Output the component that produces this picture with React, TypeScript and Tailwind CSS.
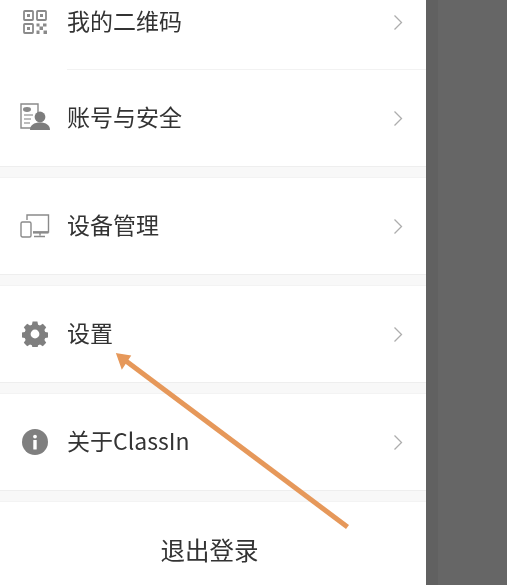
import React from 'react';

const font = { fontFamily: '"Noto Sans CJK SC", "Liberation Sans", sans-serif' };

const QrIcon = () => (
    <svg width="24" height="24" viewBox="0 0 24 24" fill="none" stroke="#8a8a8a" strokeWidth="1.8">
        <rect x="1" y="1" width="9" height="9" rx="0.8" />
        <rect x="14" y="1" width="9" height="9" rx="0.8" />
        <rect x="1" y="14" width="9" height="9" rx="0.8" />
        <rect x="4" y="4" width="3" height="3" fill="#8a8a8a" stroke="none" />
        <rect x="17" y="4" width="3" height="3" fill="#8a8a8a" stroke="none" />
        <rect x="4" y="17" width="3" height="3" fill="#8a8a8a" stroke="none" />
        <path d="M13.500 13.500h3v3h-3zM20 13.500h3.500v3H20zM16.500 16.500h3.500v3.500h-3.500zM13.500 20.500h3V24h-3zM20.500 20.500H24V24h-3.500z" fill="#8a8a8a" stroke="none" />
    </svg>
);

const AccountIcon = () => (
    <svg width="32" height="30" viewBox="0 0 32 30" fill="none">
        <path d="M15 25H2V1h17v9" stroke="#8a8a8a" strokeWidth="1.4" />
        <ellipse cx="8" cy="6.500" rx="4" ry="2.400" fill="#8a8a8a" />
        <path d="M5 12h9M5 16h7M5 20h6" stroke="#a8a8a8" strokeWidth="1.4" />
        <circle cx="21" cy="14" r="5.400" fill="#7d7d7d" />
        <path d="M11 27c0-5 4-7.500 10-7.500S31 22 31 27z" fill="#7d7d7d" />
    </svg>
);

const DeviceIcon = () => (
    <svg width="30" height="24" viewBox="0 0 30 24" fill="none" stroke="#8a8a8a" strokeWidth="1.4">
        <path d="M7 6V1h21.500v17H13" />
        <rect x="1" y="8" width="10" height="15" rx="1.500" />
        <path d="M13 18.500h15.500" strokeWidth="2.200" />
        <path d="M20 19v2.500M14 22.500h11" />
    </svg>
);

const GearIcon = () => (
    <svg width="26" height="26" viewBox="0 0 26 26">
        <path
            fillRule="evenodd"
            fill="#7f7f7f"
            d="M10.600 0.600h4.800l.7 3.200 1.900.8 2.800-1.800 3.400 3.400-1.800 2.800.8 1.900 3.200.7v4.800l-3.200.7-.8 1.900 1.800 2.800-3.400 3.400-2.800-1.800-1.900.8-.7 3.200h-4.800l-.7-3.200-1.900-.8-2.800 1.800-3.400-3.400 1.800-2.800-.8-1.900-3.200-.7v-4.800l3.200-.7.8-1.900-1.800-2.800 3.400-3.400 2.800 1.800 1.900-.8zM13 8.600a4.400 4.400 0 1 0 0 8.800 4.400 4.400 0 0 0 0-8.800z"
        />
    </svg>
);

const InfoIcon = () => (
    <svg width="26" height="26" viewBox="0 0 26 26">
        <circle cx="13" cy="13" r="13" fill="#7f7f7f" />
        <circle cx="13" cy="7.600" r="1.900" fill="#fff" />
        <rect x="11.300" y="11" width="3.400" height="9.600" rx="0.600" fill="#fff" />
    </svg>
);

const Chevron = () => (
    <svg className="mr-[23px]" width="10" height="17" viewBox="0 0 10 17" fill="none" stroke="#adadad" strokeWidth="1.300">
        <path d="M1.500 1.500 8.500 8.500 1.500 15.500" />
    </svg>
);

const Row = ({ icon, label, className = 'h-24' }: { icon: React.ReactNode; label: string; className?: string }) => (
    <div className={`flex items-center ${className}`}>
        <div className="w-[67px] flex justify-center pl-[2px] shrink-0">{icon}</div>
        <span className="flex-1 pb-[4px] text-[23px] leading-none text-[#333]">{label}</span>
        <Chevron />
    </div>
);

const Gap = () => <div className="h-3 bg-[#f8f8f8] border-t border-b border-t-[#eeeeee] border-b-[#f3f3f3]" />;

const App: React.FC = () => {
    return (
        <div className="relative flex w-[507px] h-[585px] overflow-hidden blur-[0.4px]" style={font}>
            <div className="w-[426px] shrink-0 bg-white">
                <Row icon={<QrIcon />} label="我的二维码" className="h-[70px] pb-[26px]" />
                <div className="ml-[67px] h-px -mt-px bg-[#f2f2f2]" />
                <Row icon={<AccountIcon />} label="账号与安全" />
                <Gap />
                <Row icon={<DeviceIcon />} label="设备管理" />
                <Gap />
                <Row icon={<GearIcon />} label="设置" />
                <Gap />
                <Row icon={<InfoIcon />} label="关于ClassIn" />
                <Gap />
                <div className="h-[83px] flex items-center justify-center pr-[7px] pt-[14px] text-[24.5px] leading-none text-[#333]">退出登录</div>
            </div>
            <div className="flex-1 flex bg-[#666666]">
                <div className="w-3 bg-[#616161]" />
            </div>
            {/* annotation arrow drawn over the page */}
            <svg className="absolute left-0 top-0" width="507" height="585" viewBox="0 0 507 585" fill="none">
                <path d="M347.500 527 L124 359.500" stroke="#e6985a" strokeWidth="5" />
                <path d="M117 354 L130 356 L122 368 Z" fill="#e6985a" stroke="#e6985a" strokeWidth="1.500" />
            </svg>
        </div>
    );
};

export default App;
